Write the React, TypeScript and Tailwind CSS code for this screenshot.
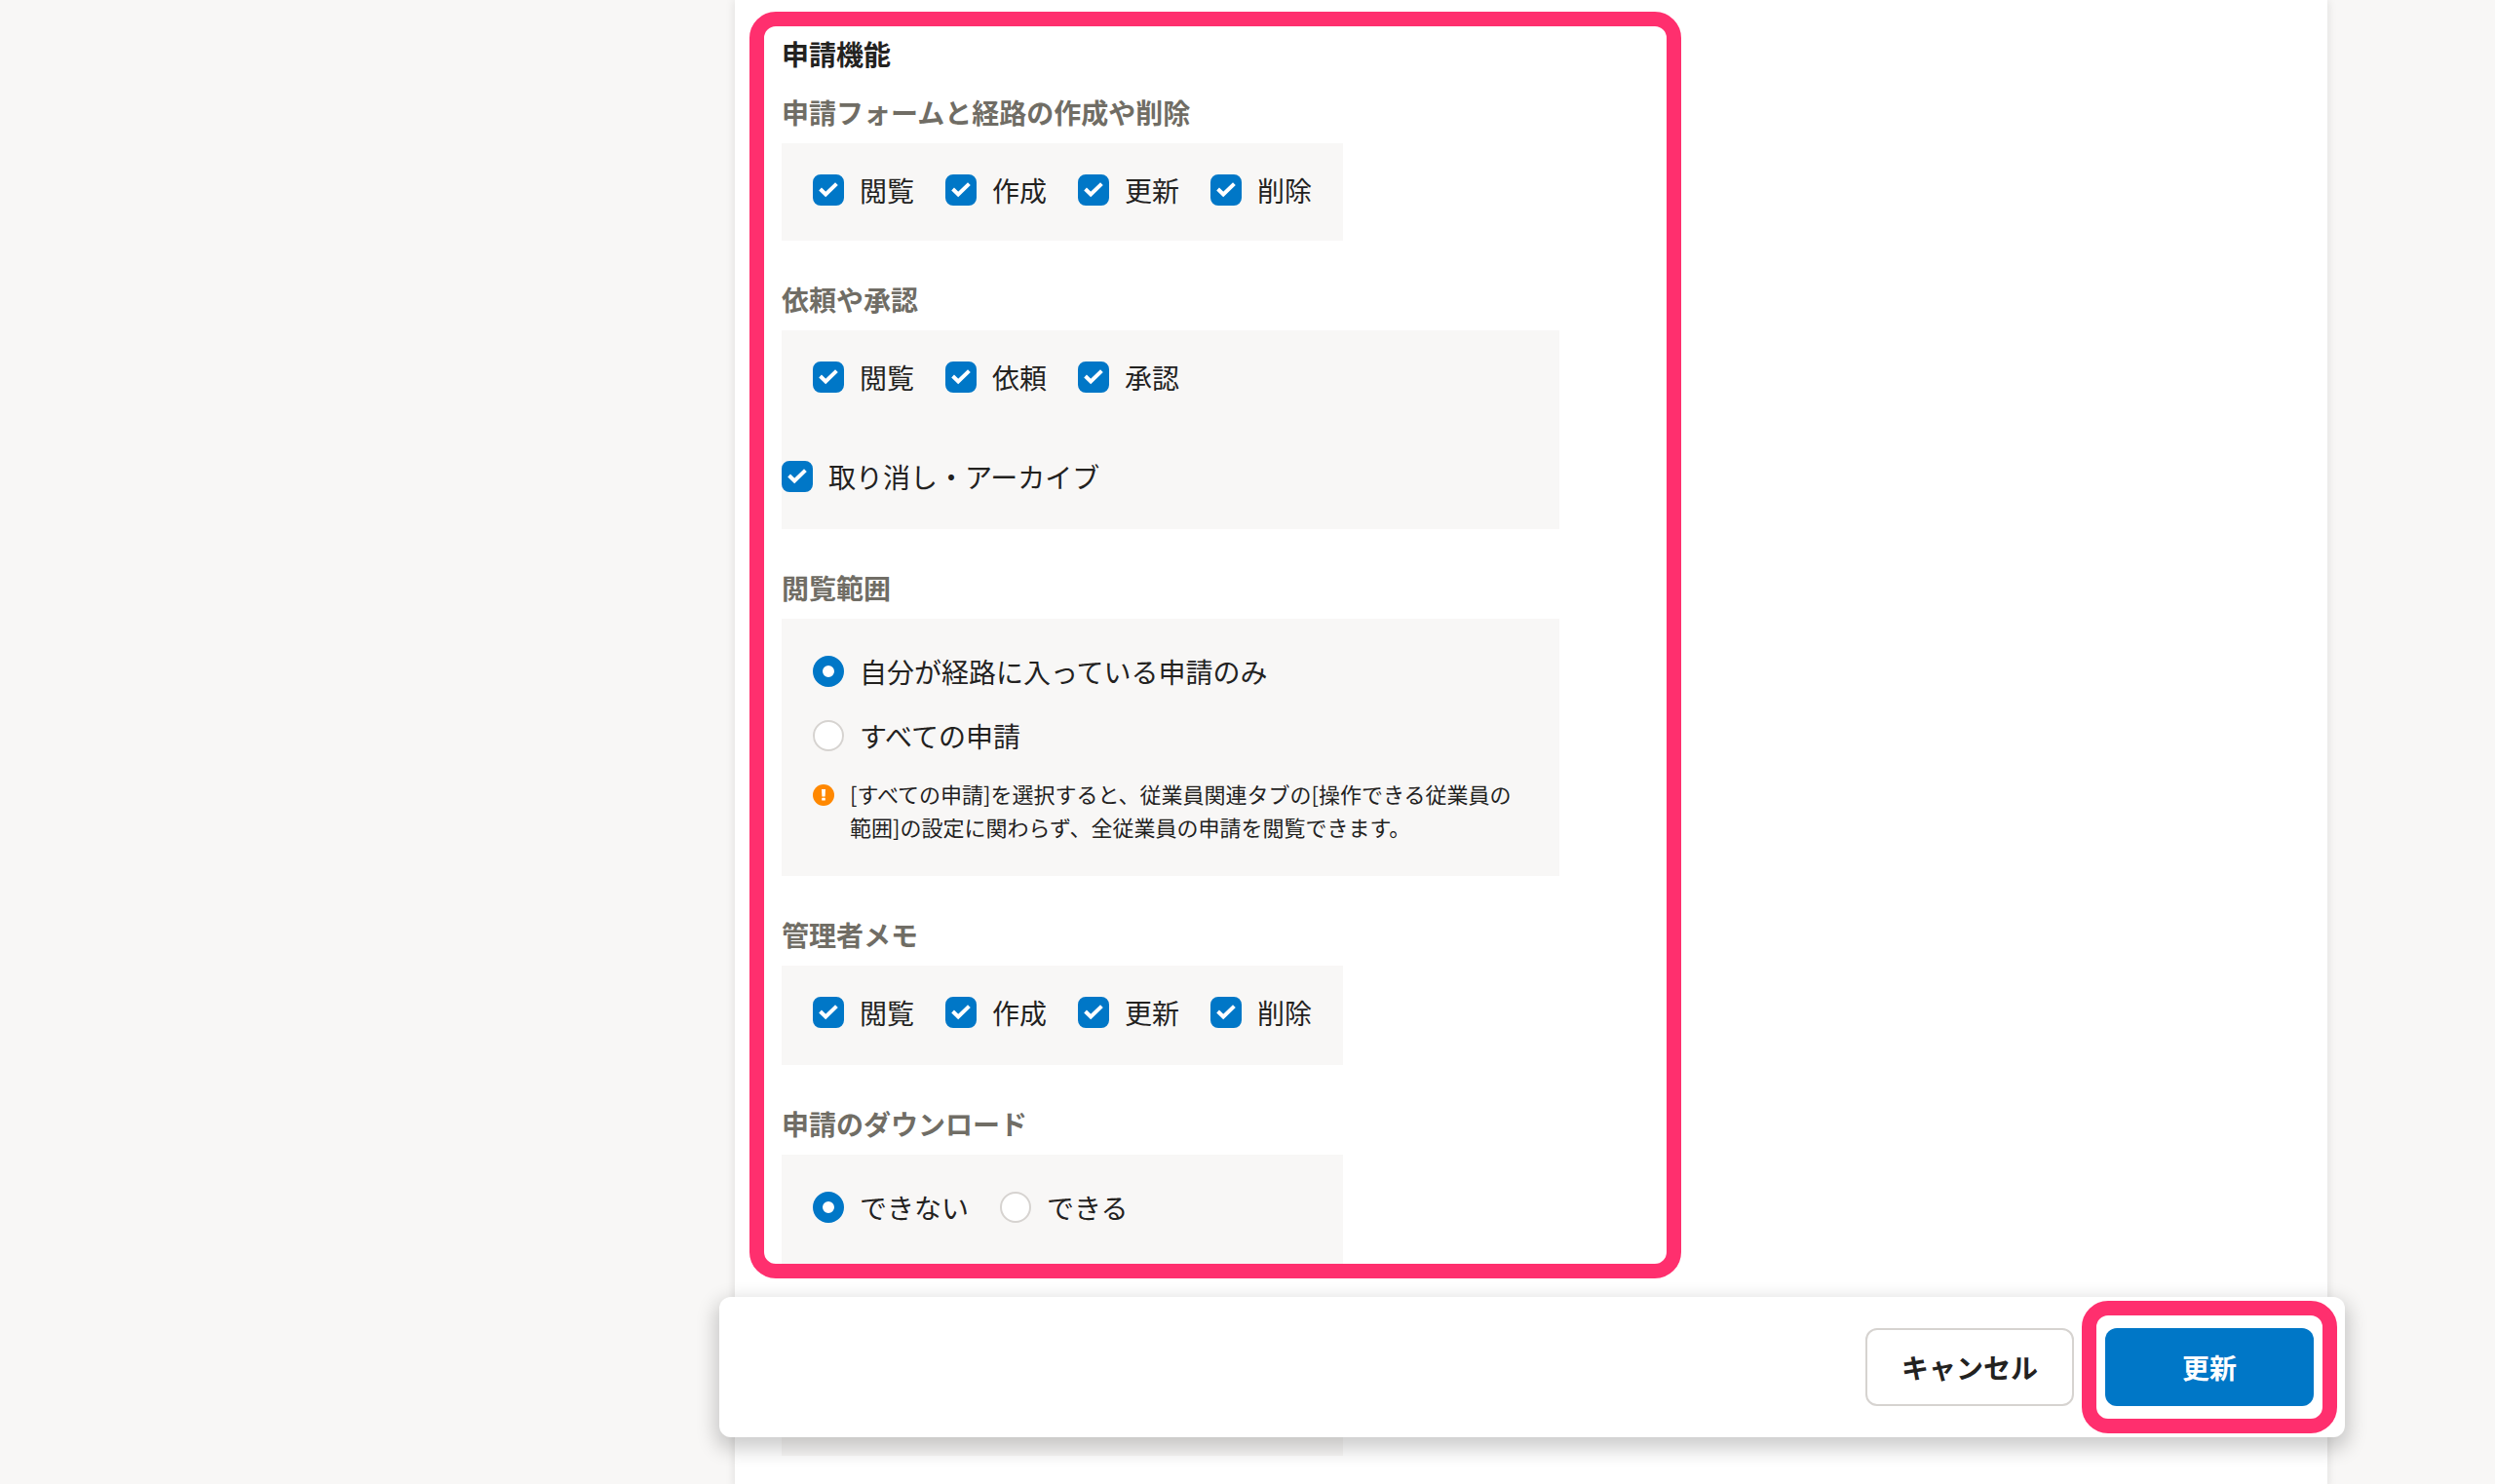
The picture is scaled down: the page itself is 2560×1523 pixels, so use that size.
import type { ReactNode } from "react";

function CheckItem({ label }: { label: string }) {
  return (
    <label className="flex items-center gap-4 leading-8">
      <span className="relative block size-8 shrink-0">
        <input
          type="checkbox"
          defaultChecked
          className="peer block size-8 appearance-none rounded-lg border-2 border-[#d6d3d0] bg-white checked:border-[#0077c7] checked:bg-[#0077c7]"
        />
        <svg
          viewBox="0 0 32 32"
          fill="none"
          stroke="white"
          strokeWidth="4"
          className="pointer-events-none absolute inset-0 hidden size-8 peer-checked:block"
        >
          <path d="M7.6 15 13.2 20.4 24.4 9.6" />
        </svg>
      </span>
      <span>{label}</span>
    </label>
  );
}

function RadioItem({ name, label, checked = false }: { name: string; label: string; checked?: boolean }) {
  return (
    <label className="flex items-center gap-4 leading-8">
      <input
        type="radio"
        name={name}
        defaultChecked={checked}
        className="block size-8 shrink-0 appearance-none rounded-full border-2 border-[#d6d3d0] bg-white checked:border-[10px] checked:border-[#0077c7]"
      />
      <span>{label}</span>
    </label>
  );
}

function Group({ title, first = false, children }: { title: string; first?: boolean; children: ReactNode }) {
  return (
    <section className={first ? "mt-5" : "mt-10"}>
      <h3 className="mb-3 font-bold leading-10 text-[#706d65]">{title}</h3>
      {children}
    </section>
  );
}

function CheckRow({ labels, className }: { labels: string[]; className: string }) {
  return (
    <div className={className}>
      {labels.map((label) => (
        <CheckItem key={label} label={label} />
      ))}
    </div>
  );
}

export default function App() {
  return (
    <div
      lang="ja"
      className="flex min-h-screen bg-[#f8f7f6] pl-[754px] pr-[172px] font-['Noto_Sans_CJK_JP',sans-serif] text-[28px] text-[#23221f]"
    >
      <main className="grow bg-white pt-3 shadow-[0_2px_8px_2px_rgba(3,3,2,0.08)]">
        <section className="ml-[15px] w-[956px] rounded-[27px] border-[15px] border-[#ff2f6e] pl-[18px] pt-2">
          <h2 className="font-bold leading-10">申請機能</h2>

          <Group title="申請フォームと経路の作成や削除" first>
            <CheckRow
              labels={["閲覧", "作成", "更新", "削除"]}
              className="flex w-fit gap-8 bg-[#f8f7f6] px-8 pb-9 pt-8"
            />
          </Group>

          <Group title="依頼や承認">
            <div className="w-[798px] bg-[#f8f7f6]">
              <CheckRow labels={["閲覧", "依頼", "承認"]} className="flex gap-8 px-8 pb-[38px] pt-8" />
              <CheckRow labels={["取り消し・アーカイブ"]} className="flex pb-[38px] pt-8" />
            </div>
          </Group>

          <Group title="閲覧範囲">
            <div className="w-[798px] bg-[#f8f7f6] px-8 pb-[34px] pt-[38px]">
              <div className="flex flex-col gap-[34px]">
                <RadioItem name="scope" label="自分が経路に入っている申請のみ" checked />
                <RadioItem name="scope" label="すべての申請" />
              </div>
              <div className="mt-[26px] flex gap-4 text-[22px] leading-[34px]">
                <svg viewBox="0 0 22 22" className="mt-2 size-[22px] shrink-0">
                  <circle cx="11" cy="11" r="11" fill="#ff8800" />
                  <path d="M9 5h4l-.4 7.6H9.4z" fill="white" />
                  <rect x="9.2" y="13.8" width="3.6" height="2.8" rx="0.6" fill="white" />
                </svg>
                <p>
                  [すべての申請]を選択すると、従業員関連タブの[操作できる従業員の
                  <br />
                  範囲]の設定に関わらず、全従業員の申請を閲覧できます。
                </p>
              </div>
            </div>
          </Group>

          <Group title="管理者メモ">
            <CheckRow
              labels={["閲覧", "作成", "更新", "削除"]}
              className="flex w-fit gap-8 bg-[#f8f7f6] px-8 pb-[38px] pt-8"
            />
          </Group>

          <Group title="申請のダウンロード">
            <div className="flex w-[576px] gap-8 bg-[#f8f7f6] px-8 pb-[42px] pt-[38px]">
              <RadioItem name="download" label="できない" checked />
              <RadioItem name="download" label="できる" />
            </div>
          </Group>
        </section>

        <div className="ml-12 mt-20 h-[102px] w-[576px] bg-[#f8f7f6]" />
      </main>

      <footer className="fixed bottom-12 left-[738px] right-[154px] flex justify-end gap-8 rounded-xl bg-white p-8 font-bold shadow-[0_8px_20px_4px_rgba(3,3,2,0.2)]">
        <button type="button" className="h-20 w-[214px] rounded-xl border-2 border-[#d6d3d0] bg-white">
          キャンセル
        </button>
        <div className="relative">
          <button type="button" className="h-20 w-[214px] rounded-xl bg-[#0077c7] text-white">
            更新
          </button>
          <span className="pointer-events-none absolute -inset-x-6 -inset-y-7 rounded-[27px] border-[15px] border-[#ff2f6e]" />
        </div>
      </footer>
    </div>
  );
}
